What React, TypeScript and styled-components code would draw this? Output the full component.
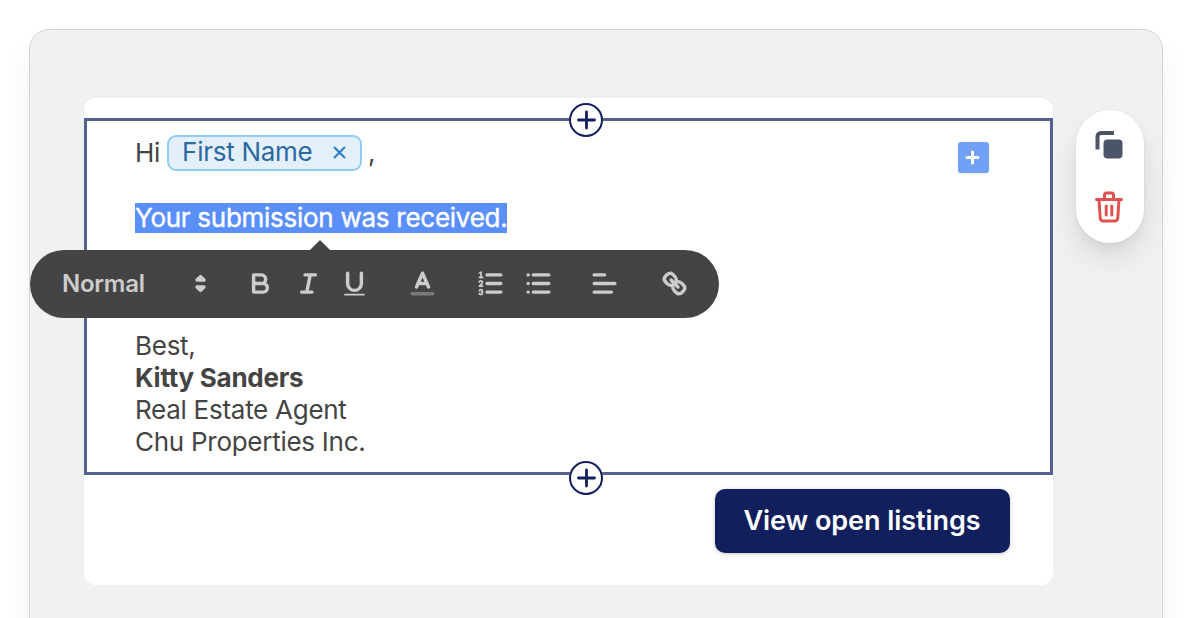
import type { ReactNode } from 'react';
import styled, { createGlobalStyle } from 'styled-components';

const GlobalStyle = createGlobalStyle`
  * {
    box-sizing: border-box;
  }
  body {
    margin: 0;
    background: #fff;
    font-family: Inter, 'Liberation Sans', sans-serif;
    overflow: hidden;
  }
`;

const PAGE = styled.main`
  height: 618px;
  padding: 29px 27px 0 29px;
  overflow: hidden;
`;

const CANVAS = styled.section`
  display: flex;
  align-items: flex-start;
  height: 680px;
  padding: 68px 18px 0 54px;
  border: 1px solid #d1d5db;
  border-radius: 20px;
  background: #f0f1f3;
  box-shadow: 0 20px 32px rgba(0, 0, 0, 0.05);
`;

const EMAIL = styled.article`
  width: 969px;
  height: 487px;
  padding-top: 20px;
  border-radius: 12px;
  background: #fff;
`;

const BLOCK = styled.div`
  position: relative;
  display: flex;
  justify-content: space-between;
  height: 357px;
  padding: 14px 61px 0 48px;
  border: 3px solid #55628f;
`;

const ADD_BLOCK = styled.button<{ $edge: 'top' | 'bottom' }>`
  position: absolute;
  left: 482px;
  ${({ $edge }) => ($edge === 'top' ? 'top: -18px;' : 'bottom: -22.5px;')}
  display: flex;
  padding: 0;
  border: 0;
  border-radius: 50%;
  background: #fff;
`;

const COPY = styled.div`
  color: #444;
  font-size: 26px;
  letter-spacing: -0.27px;
  line-height: 32px;
  white-space: nowrap;
`;

const GREETING = styled.div`
  display: flex;
  align-items: center;
  height: 35px;
`;

const TAG = styled.span`
  display: flex;
  align-items: center;
  justify-content: space-between;
  width: 195px;
  height: 36px;
  margin: 0 6px 0 7px;
  padding: 0 11px 2px 13px;
  border: 2px solid #90cdf4;
  border-radius: 9px;
  background: #e3f0fb;
  color: #2c699f;
`;

const SELECTED = styled.div`
  width: 372px;
  height: 30px;
  margin-top: 33px;
  background: #5a8ef9;
  color: #fff;
  line-height: 30px;
  -webkit-text-stroke: 0.4px #fff;
`;

const SIGNATURE = styled.div`
  margin-top: 97px;
`;

const INSERT = styled.button`
  display: flex;
  align-items: center;
  justify-content: center;
  width: 31px;
  height: 31px;
  margin-top: 7px;
  padding: 0 2px 0 0;
  border: 0;
  border-radius: 3px;
  background: #70a1f6;
  box-shadow: 0 1px 3px rgba(0, 0, 0, 0.08);
`;

const TOOLBAR = styled.div`
  position: absolute;
  left: -57px;
  top: 129px;
  display: flex;
  align-items: center;
  width: 689px;
  height: 68px;
  padding: 0 0 1px 32px;
  border-radius: 34px;
  background: #444;
  color: #ccc;

  &::before {
    content: '';
    position: absolute;
    left: 280px;
    top: -10px;
    border: 10px solid transparent;
    border-top: 0;
    border-bottom-color: #444;
  }
`;

const FORMAT = styled.span`
  width: 123px;
  padding-top: 1px;
  font-size: 24px;
  font-weight: 600;
  letter-spacing: -0.25px;
  line-height: 40px;
`;

const TOOL = styled.svg<{ $gap?: number }>`
  flex: none;
  width: 31px;
  height: 31px;
  margin-left: ${({ $gap = 0 }) => $gap}px;
  fill: none;
  stroke: currentColor;
  stroke-width: 2;
  stroke-linecap: round;
  stroke-linejoin: round;

  .thin {
    stroke-width: 1;
  }
  .fill {
    fill: currentColor;
    stroke: none;
  }
`;

const FOOTER = styled.div`
  display: flex;
  justify-content: flex-end;
  padding: 14px 43px 0 0;
`;

const LISTINGS = styled.button`
  width: 295px;
  height: 64px;
  padding: 0 1px 2px 0;
  border: 0;
  border-radius: 10px;
  background: #111f5c;
  box-shadow: 0 1px 4px rgba(0, 0, 0, 0.2);
  color: #fff;
  font-family: inherit;
  font-size: 27px;
  font-weight: 600;
  letter-spacing: -0.06px;
`;

const ACTIONS = styled.aside`
  display: flex;
  flex-direction: column;
  align-items: center;
  width: 68px;
  height: 133px;
  margin: 12px 0 0 23px;
  padding: 21px 2px 0 0;
  border-radius: 34px;
  background: #fff;
  box-shadow:
    0 0 0 1px rgba(0, 0, 0, 0.02),
    0 16px 30px rgba(0, 0, 0, 0.09),
    0 6px 10px rgba(0, 0, 0, 0.05);

  svg + svg {
    margin-top: 32px;
  }
`;

function Tool({ gap, children }: { gap?: number; children: ReactNode }): JSX.Element {
  return (
    <TOOL viewBox="0 0 18 18" $gap={gap}>
      {children}
    </TOOL>
  );
}

function AddBlock({ edge }: { edge: 'top' | 'bottom' }): JSX.Element {
  return (
    <ADD_BLOCK $edge={edge} aria-label="Add block">
      <svg width="34" height="34" viewBox="0 0 34 34" fill="none" stroke="#111f5c">
        <circle cx="17" cy="17" r="16" strokeWidth="2" />
        <path d="M17.5 9v16M9.5 17h16" strokeWidth="2.8" strokeLinecap="round" />
      </svg>
    </ADD_BLOCK>
  );
}

function Toolbar(): JSX.Element {
  return (
    <TOOLBAR>
      <FORMAT>Normal</FORMAT>
      <Tool>
        <path fill="currentColor" d="M7 11l2 2 2-2zM7 7l2-2 2 2z" />
      </Tool>
      <Tool gap={29}>
        <path d="M5,4H9.5A2.5,2.5,0,0,1,9.5,9H5ZM5,9h5.5A2.5,2.5,0,0,1,10.5,14H5Z" />
      </Tool>
      <Tool gap={17}>
        <path d="M7 4h6M5 14h6M8 14L10 4" />
      </Tool>
      <Tool gap={15}>
        <path d="M5,3V9a4,4,0,0,0,8,0V3" />
        <rect className="fill" x="3" y="15" width="12" height="1" rx="0.5" />
      </Tool>
      <Tool gap={37}>
        <path d="M3 15h12" opacity="0.4" />
        <path d="M5.5 11L9 3l3.5 8M11.63 9H6.38" />
      </Tool>
      <Tool gap={37}>
        <path d="M7 4h8M7 9h8M7 14h8" />
        <path className="thin" d="M2.5 5.5h2" />
        <path
          className="fill"
          d="M3.5,6A0.5,0.5,0,0,1,3,5.5V3.085l-0.276.138A0.5,0.5,0,0,1,2.053,3c-0.124-.247-0.023-0.324.224-0.447l1-.5A0.5,0.5,0,0,1,4,2.5v3A0.5,0.5,0,0,1,3.5,6Z"
        />
        <path
          className="thin"
          d="M4.5,10.5h-2c0-.234,1.85-1.076,1.85-2.234A0.959,0.959,0,0,0,2.5,8.156"
        />
        <path
          className="thin"
          d="M2.5,14.846a0.959,0.959,0,0,0,1.85-.109A0.7,0.7,0,0,0,3.75,14a0.688,0.688,0,0,0,.6-0.736,0.959,0.959,0,0,0-1.85-.109"
        />
      </Tool>
      <Tool gap={17}>
        <path d="M6 4h9M6 9h9M6 14h9M3 4h0M3 9h0M3 14h0" />
      </Tool>
      <Tool gap={35}>
        <path d="M3 4h6M3 9h12M3 14h10" />
      </Tool>
      <Tool gap={39}>
        <path d="M7 7l4 4" />
        <path d="M8.9,4.577a3.476,3.476,0,0,1,.36,4.679A3.476,3.476,0,0,1,4.577,8.9C3.185,7.5,2.035,6.4,4.217,4.217S7.5,3.185,8.9,4.577Z" />
        <path d="M13.423,9.1a3.476,3.476,0,0,0-4.679-.36,3.476,3.476,0,0,0,.36,4.679c1.392,1.392,2.5,2.542,4.679.36S14.815,10.5,13.423,9.1Z" />
      </Tool>
    </TOOLBAR>
  );
}

export function App(): JSX.Element {
  return (
    <PAGE>
      <GlobalStyle />
      <CANVAS>
        <EMAIL>
          <BLOCK>
            <COPY>
              <GREETING>
                Hi
                <TAG>
                  First Name
                  <svg width="17" height="17" viewBox="0 0 17 17" stroke="#3182ce" strokeWidth="2.2">
                    <path d="M2 4l11 11M13 4L2 15" />
                  </svg>
                </TAG>
                ,
              </GREETING>
              <SELECTED>Your submission was received.</SELECTED>
              <SIGNATURE>
                Best,
                <br />
                <strong>Kitty Sanders</strong>
                <br />
                Real Estate Agent
                <br />
                Chu Properties Inc.
              </SIGNATURE>
            </COPY>
            <INSERT aria-label="Insert">
              <svg width="15" height="15" viewBox="0 0 15 15" stroke="#fff" strokeWidth="3" strokeLinecap="round">
                <path d="M7.5 2v11M2 7.5h11" />
              </svg>
            </INSERT>
            <AddBlock edge="top" />
            <AddBlock edge="bottom" />
            <Toolbar />
          </BLOCK>
          <FOOTER>
            <LISTINGS>View open listings</LISTINGS>
          </FOOTER>
        </EMAIL>
        <ACTIONS>
          <svg width="28" height="28" viewBox="0 0 28 28">
            <path
              d="M2.5 18.5V5.5a3.5 3.5 0 0 1 3.5-3.5H19"
              fill="none"
              stroke="#4a5568"
              strokeWidth="4"
            />
            <rect x="5" y="5" width="23" height="23" rx="4" fill="#fff" />
            <rect x="8.5" y="8.5" width="19" height="19" rx="4" fill="#4a5568" />
          </svg>
          <svg
            width="28"
            height="32"
            viewBox="0 0 28 32"
            fill="none"
            stroke="#e05252"
            strokeWidth="3"
            strokeLinecap="round"
            strokeLinejoin="round"
          >
            <path d="M1.5 8.5h25M9.5 8V4a2 2 0 0 1 2-2h5a2 2 0 0 1 2 2v4M4 9l1.2 18a3 3 0 0 0 3 3h11.6a3 3 0 0 0 3-3L24 9M11.2 15v9M16.8 15v9" />
          </svg>
        </ACTIONS>
      </CANVAS>
    </PAGE>
  );
}

export default App;
